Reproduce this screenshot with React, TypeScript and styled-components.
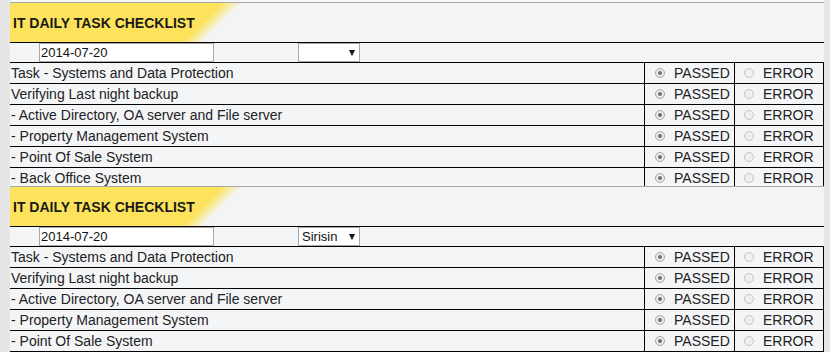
import React, { FC } from "react";
import styled, { createGlobalStyle } from "styled-components";

const GlobalStyle = createGlobalStyle`
  html, body {
    margin: 0;
    padding: 0;
    background: #e6e6e6;
    font-family: "Liberation Sans", Arial, sans-serif;
  }
`;

const Page = styled.div`
  height: 352px;
  overflow: hidden;
  padding: 0 6px 0 10px;
  background: #e6e6e6;
`;

const Sheet = styled.div`
  height: 352px;
  padding-top: 2px;
  box-sizing: border-box;
  background: #f4f5f7;
`;

const Panel = styled.section`
  height: 183px;
  overflow: hidden;
  border-top: 1px solid #a7a9ac;
  background: #f4f5f7;
`;

const Header = styled.div`
  height: 39px;
  border-bottom: 1px solid #000;
  padding-left: 3px;
  background: linear-gradient(
    135deg,
    #fde35b 0,
    #fde35b 150px,
    #f3f4f6 164px,
    #f3f4f6 100%
  );
  display: flex;
  align-items: center;
`;

const Title = styled.h1`
  margin: 0;
  font-size: 14px;
  font-weight: bold;
  color: #1a1a1a;
`;

const DateRow = styled.div`
  height: 19px;
  border-bottom: 1px solid #000;
  display: flex;
  align-items: flex-start;
  padding-left: 29px;
`;

const DateInput = styled.input`
  width: 175px;
  height: 19px;
  box-sizing: border-box;
  margin: 0;
  padding: 0 1px;
  border: 1px solid #a9a9a9;
  background: #fff;
  font-family: "Liberation Sans", Arial, sans-serif;
  font-size: 13px;
  color: #111;
  outline: none;
`;

const Picker = styled.div`
  margin-left: 84px;
  width: 62px;
  height: 19px;
  box-sizing: border-box;
  border: 1px solid #a9a9a9;
  background: #fff;
  display: flex;
  align-items: center;
  justify-content: space-between;
  padding: 0 4px 0 3px;
  font-size: 13px;
  color: #111;
`;

const Arrow = styled.span`
  width: 0;
  height: 0;
  border-left: 3.5px solid transparent;
  border-right: 3.5px solid transparent;
  border-top: 6px solid #111;
`;

const Row = styled.div`
  display: grid;
  grid-template-columns: 634px 90px 90px;
  height: 20px;
  border-bottom: 1px solid #000;
  font-size: 14px;
  line-height: 20px;
  color: #222;
`;

const TaskCell = styled.div`
  padding-left: 1px;
  white-space: nowrap;
`;

const ChoiceCell = styled.label<{ $last?: boolean }>`
  display: flex;
  align-items: center;
  border-left: 1px solid #000;
  border-right: ${p => (p.$last ? "1px solid #000" : "none")};
  padding-left: ${p => (p.$last ? "9px" : "10px")};
  gap: 9px;
  white-space: nowrap;
`;

const Radio = styled.span<{ $on?: boolean }>`
  width: 10px;
  height: 10px;
  flex: none;
  box-sizing: border-box;
  border-radius: 50%;
  border: 1px solid ${p => (p.$on ? "#a8a8a8" : "#c4c4c4")};
  background: ${p => (p.$on ? "#ebebeb" : "#f0f0f0")};
  display: flex;
  align-items: center;
  justify-content: center;
  &::after {
    content: "";
    width: 4px;
    height: 4px;
    border-radius: 50%;
    background: ${p => (p.$on ? "#6f6f6f" : "transparent")};
  }
`;

const tasks = [
  "Task - Systems and Data Protection",
  "Verifying Last night backup",
  "- Active Directory, OA server and File server",
  "- Property Management System",
  "- Point Of Sale System",
  "- Back Office System",
];

interface ChecklistProps {
  date: string;
  staff: string;
}

const Checklist: FC<ChecklistProps> = ({ date, staff }) => (
  <Panel>
    <Header>
      <Title>IT DAILY TASK CHECKLIST</Title>
    </Header>
    <DateRow>
      <DateInput value={date} readOnly />
      <Picker>
        <span>{staff}</span>
        <Arrow />
      </Picker>
    </DateRow>
    {tasks.map(t => (
      <Row key={t}>
        <TaskCell>{t}</TaskCell>
        <ChoiceCell>
          <Radio $on />
          PASSED
        </ChoiceCell>
        <ChoiceCell $last>
          <Radio />
          ERROR
        </ChoiceCell>
      </Row>
    ))}
  </Panel>
);

const App: FC = () => (
  <>
    <GlobalStyle />
    <Page>
      <Sheet>
        <Checklist date="2014-07-20" staff="" />
        <Checklist date="2014-07-20" staff="Sirisin" />
      </Sheet>
    </Page>
  </>
);

export default App;
